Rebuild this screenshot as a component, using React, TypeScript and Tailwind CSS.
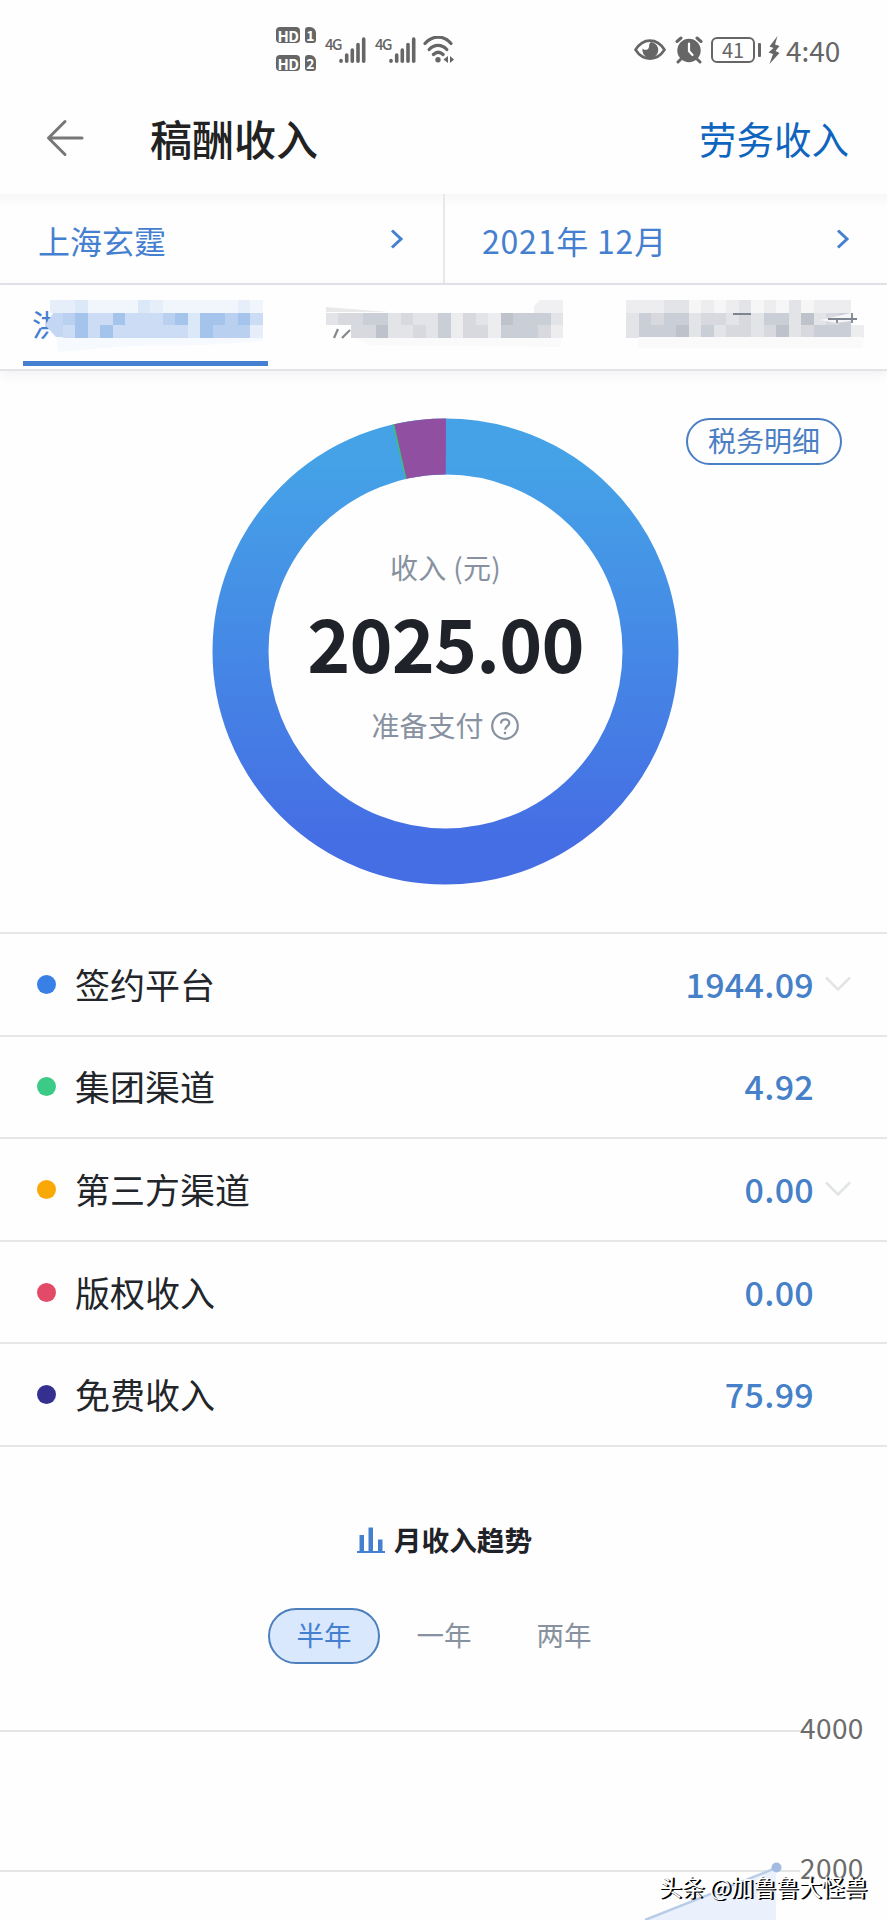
import type { ReactNode } from "react";

interface IncomeItem {
  name: string;
  amount: string;
  dot: string;
  expandable?: boolean;
}

const incomeItems: IncomeItem[] = [
  { name: "签约平台", amount: "1944.09", dot: "bg-[#3880e6]", expandable: true },
  { name: "集团渠道", amount: "4.92", dot: "bg-[#3ccb86]" },
  { name: "第三方渠道", amount: "0.00", dot: "bg-[#f9a806]", expandable: true },
  { name: "版权收入", amount: "0.00", dot: "bg-[#e24a68]" },
  { name: "免费收入", amount: "75.99", dot: "bg-[#35308f]" },
];

// One string per row of the censor mosaic, each letter is a shade
const blueShades: Record<string, string> = {
  a: "#f1f6fd",
  b: "#e6eef9",
  c: "#dbe8f8",
  d: "#cbdcf4",
  e: "#b9d0f0",
  f: "#a5c4ec",
};
const grayShades: Record<string, string> = {
  a: "#f6f6f7",
  b: "#ededef",
  c: "#e3e4e8",
  d: "#d7d9df",
  e: "#caced7",
  f: "#bdc2cb",
};

const CELL = 12.5;

interface MosaicProps {
  rows: string[];
  shades: Record<string, string>;
  x: number;
  y: number;
}

function Mosaic({ rows, shades, x, y }: MosaicProps) {
  return (
    <g shapeRendering="crispEdges">
      {rows.map((row, r) =>
        row.split("").map((c, i) =>
          shades[c] ? (
            <rect key={`${r}-${i}`} x={x + i * CELL} y={y + r * CELL} width={CELL} height={CELL} fill={shades[c]} />
          ) : null
        )
      )}
    </g>
  );
}

function Signal() {
  return (
    <svg width="27" height="28" viewBox="0 0 27 28" stroke="#666" strokeWidth="3.6" strokeLinecap="round">
      <path d="M2 24.500v.8M7.700 19v6.300M13.300 14v11.300M19 8.500v16.800M24.700 3v22.300" />
    </svg>
  );
}

function HdBadge({ sim }: { sim: string }) {
  return (
    <div className="flex gap-[5px] h-4 text-white font-bold leading-none">
      <span className="w-6 h-4 rounded-[4px] bg-[#666] text-[15px] tracking-[-0.5px] flex items-center justify-center">HD</span>
      <span className="w-[11px] h-4 rounded-[3px] rounded-tr-[6px] bg-[#666] text-[14px] flex items-center justify-center">
        {sim}
      </span>
    </div>
  );
}

function StatusBar() {
  return (
    <div className="h-[94px] flex text-[#666]">
      <div className="w-[276px] shrink-0" />
      <div className="flex flex-col gap-3 pt-[27px] w-[49px]">
        <HdBadge sim="1" />
        <HdBadge sim="2" />
      </div>
      <div className="flex pt-[36px]">
        <span className="text-[15px] font-medium leading-[15px] w-[14px] tracking-[-1.5px] whitespace-nowrap">4G</span>
        <Signal />
        <span className="text-[15px] font-medium leading-[15px] w-[14px] ml-[9px] tracking-[-1.5px] whitespace-nowrap">4G</span>
        <Signal />
        <svg className="ml-[7px]" width="34" height="30" viewBox="0 0 34 30" fill="none" stroke="#666" strokeWidth="3.2" strokeLinecap="round">
          <path d="M2 7.500C9.500-1 21-1 28 7.500M6.200 13.500c5-5.500 12.600-5.500 17.600 0M10.400 18.500c3-2.800 6.700-2.800 9.700 0" />
          <circle cx="15" cy="23.700" r="2.700" fill="#666" stroke="none" />
          <path d="M20.500 23.500l4.500-3.500v7zM31 23.500l-4-3.500v7z" fill="#666" stroke="none" />
        </svg>
      </div>
      <div className="flex ml-auto pt-[34px] pr-[47px]">
        <svg width="32" height="32" viewBox="0 0 32 32" fill="none">
          <path d="M1.500 15.800C9 3.500 23 3.500 30.500 15.800C23 27.500 9 27.500 1.500 15.800Z" stroke="#666" strokeWidth="2.600" />
          <path d="M17 8a8 8 0 1 1-8.500 6.200c1.400 2.500 6 2.200 6.500-1.200.3-2-.2-3.500 2-5z" fill="#666" />
        </svg>
        <svg className="ml-[9px]" width="28" height="32" viewBox="0 0 28 32" fill="none" stroke="#666" strokeLinecap="round">
          <circle cx="14" cy="16.500" r="11.700" fill="#666" stroke="none" />
          <path d="M2 7.500l4-3.500M26 7.500l-4-3.500M5.500 25.500L3 28M22.500 25.500L25 28" strokeWidth="3" />
          <path d="M14 9.500v7.500l3.500 4" stroke="#fff" strokeWidth="2.200" />
        </svg>
        <div className="ml-[8px] mt-[3px] w-[44px] h-[26px] rounded-[6px] border-2 border-[#666] flex items-center justify-center text-[20px] leading-none">
          41
        </div>
        <div className="ml-[3px] mt-[9px] w-[3px] h-[14px] rounded-[1px] bg-[#666]" />
        <svg className="ml-[7px] mt-[2px]" width="12" height="28" viewBox="0 0 12 28" fill="#666">
          <path d="M9.500 0L1.500 10.500l4 1.500L.5 16.500l4.500 1.500L1.500 28L11.500 17l-4-2L11.500 10l-4.500-1.500z" />
        </svg>
        <span className="ml-[6px] text-[28px] leading-[33px] w-[54px] whitespace-nowrap">4:40</span>
      </div>
    </div>
  );
}

function Chevron() {
  return (
    <svg width="14" height="20" viewBox="0 0 14 20" fill="none" stroke="#4580d0" strokeWidth="3">
      <path d="M2 1.500L11 10L2 18.500" />
    </svg>
  );
}

function Picker({ children, className }: { children: ReactNode; className: string }) {
  return (
    <div className={`flex items-center justify-between text-[32px] text-[#4580d0] ${className}`}>
      <span className="leading-none pt-[2px]">{children}</span>
      <Chevron />
    </div>
  );
}

function Tabs() {
  return (
    <div className="h-[86px] shrink-0 border-b-2 border-[#e3e4e8] shadow-[0_3px_12px_rgba(0,0,0,0.06)]">
      <svg width="887" height="84" viewBox="0 0 887 84">
        <text x="32" y="51" fontSize="30" fill="#4580d0">
          洪
        </text>
        <path d="M52 19l50-4 100 8 61-3v36l-60 4-75 1-70 6z" fill="#f6f9fd" />
        <path d="M45 40l9-13h10v25h-8z" fill="#c3d7f2" />
        <Mosaic x={50.2} y={15} shades={blueShades} rows={["bbcaaaacbaaaaaaba"]} />
        <Mosaic x={62.7} y={27.5} shades={blueShades} rows={["efddfdddefcffefd", "dfdfddddddcfeeeb"]} />
        <path d="M326 22l62 5h-62z" fill="#e9e9eb" />
        <path d="M350 52h212l-2 10-190-2z" fill="#fafafb" />
        <path d="M534 21l6-6h23v13h-29z" fill="#f0f0f2" />
        <path d="M334 53l4-9M342 53l8-8" stroke="#85888f" strokeWidth="2.200" />
        <Mosaic x={325.5} y={27.5} shades={grayShades} rows={["cddeecdccebdcbfeeec", "..ddfccdcebddbeeedb"]} />
        <Mosaic x={626} y={15} shades={grayShades} rows={["bbbccababcabacabbb"]} />
        <Mosaic x={626} y={27.5} shades={grayShades} rows={["cedeecddcdceecfcde", "ceeefcecddcdfcdeeeb"]} />
        <path d="M638 52h225v11H638z" fill="#fafafb" />
        <path d="M820 35l31-7v8l-15 2z" fill="#f6f6f7" />
        <path d="M733 29h18M828 34h29M852 28v10M837 33v5" stroke="#7e8490" strokeWidth="1.800" />
      </svg>
      <div className="-mt-[8px] ml-[23px] w-[245px] h-[5px] bg-[#4580d0]" />
    </div>
  );
}

const CX = 233.5;
const R_OUT = 233;
const R_IN = 177;

function slice(from: number, to: number) {
  const point = (r: number, deg: number) => {
    const a = ((deg - 90) * Math.PI) / 180;
    return `${CX + r * Math.cos(a)} ${CX + r * Math.sin(a)}`;
  };
  return `M${point(R_OUT, from)}A${R_OUT} ${R_OUT} 0 0 1 ${point(R_OUT, to)}L${point(R_IN, to)}A${R_IN} ${R_IN} 0 0 0 ${point(R_IN, from)}Z`;
}

function IncomeDonut() {
  return (
    <div className="relative w-[467px] h-[467px]">
      <svg width="467" height="467" viewBox="0 0 467 467">
        <defs>
          <linearGradient id="ring" x1="0" y1="0" x2="0" y2="467" gradientUnits="userSpaceOnUse">
            <stop offset="0.1" stopColor="#45a2e7" />
            <stop offset="0.9" stopColor="#456ee4" />
          </linearGradient>
        </defs>
        <circle cx={CX} cy={CX} r="205" fill="none" stroke="url(#ring)" strokeWidth="56" />
        <path d={slice(-13.2, -12.4)} fill="#3dba8b" />
        <path d={slice(-12.7, 0.1)} fill="#904fa0" />
      </svg>
      <div className="absolute inset-0 flex flex-col items-center text-[#87919f] text-[28px]">
        <div className="mt-[133px] leading-8 tracking-[0.3px]">收入 (元)</div>
        <div className="mt-[18px] text-[73px] leading-[80px] tracking-[-0.8px] font-bold text-[#1f2329]">2025.00</div>
        <div className="mt-[30px] flex items-center gap-[7px] leading-8 pr-px">
          <span className="-mt-[2px]">准备支付</span>
          <svg width="28" height="28" viewBox="0 0 28 28" fill="none" stroke="#87919f" strokeWidth="2.200">
            <circle cx="14" cy="14" r="12.800" />
            <path d="M10 11.500c0-5.500 8.300-5.500 8.300-.4 0 3-4.200 3.200-4.200 6.600" />
            <path d="M14 19.800v2.400" />
          </svg>
        </div>
      </div>
    </div>
  );
}

function IncomeRow({ item }: { item: IncomeItem }) {
  return (
    <div className="h-[102.6px] border-b-2 border-[#e6e6e8] flex items-center pl-[37px] pr-[36px]">
      <span className={`w-[19px] h-[19px] rounded-full ${item.dot}`} />
      <span className="ml-[19px] -mt-[2px] text-[35px] leading-none text-[#222529]">{item.name}</span>
      <span className="ml-auto -mt-px text-[34px] leading-none font-medium tracking-[0.3px] text-[#4580c8]">{item.amount}</span>
      <span className="w-[37px] flex justify-end">
        {item.expandable && (
          <svg width="26" height="16" viewBox="0 0 26 16" fill="none" stroke="#e3e4e6" strokeWidth="2.500">
            <path d="M1 1.500L13 13.500L25 1.500" />
          </svg>
        )}
      </span>
    </div>
  );
}

function TrendChart() {
  return (
    <div className="relative h-[220px]">
      <svg width="887" height="220" viewBox="0 0 887 220">
        <path d="M0 31h800M0 171h800" stroke="#e4e5e7" strokeWidth="2" />
        <path d="M645 220L776 168V220z" fill="#eaf1fc" />
        <path d="M645 220L776 168" stroke="#b8cce8" strokeWidth="2.500" />
        <circle cx="776.500" cy="167.500" r="5" fill="#a3bbe0" />
        <g fontSize="28" letterSpacing="0.4" fill="#6b6b6b">
          <text x="800" y="39">4000</text>
          <text x="800" y="179">2000</text>
        </g>
      </svg>
      <div className="absolute right-[20px] bottom-[17px] text-[22.7px] leading-8 whitespace-nowrap text-white [text-shadow:1px_1px_0_#000,2px_1px_0_#000]">
        头条 @加鲁鲁大怪兽
      </div>
    </div>
  );
}

export default function App() {
  return (
    <div className="w-[887px] h-[1920px] overflow-hidden flex flex-col bg-[#fefefe] font-['Noto_Sans_CJK_SC',sans-serif]">
      <StatusBar />
      <header className="h-[100px] shrink-0 flex items-center pl-[46px] pr-[38px] pb-[12px]">
        <svg width="38" height="38" viewBox="0 0 38 38" fill="none" stroke="#777" strokeWidth="3" strokeLinecap="round" strokeLinejoin="round">
          <path d="M36 19H3M19 2.500L2.500 19L19 35.500" />
        </svg>
        <h1 className="ml-[66px] text-[42px] leading-none font-medium text-[#222]">稿酬收入</h1>
        <span className="ml-auto text-[37.5px] leading-none text-[#0f65be]">劳务收入</span>
      </header>
      <div className="h-[91px] shrink-0 flex border-b-2 border-[#e3e4e8] bg-[linear-gradient(#f7f7f7,#fefefe_14px)]">
        <Picker className="w-[445px] border-r-2 border-[#e8e8ea] pl-[38px] pr-[39px]">上海玄霆</Picker>
        <Picker className="grow pl-[37px] pr-[37px] tracking-[0.8px]">2021年 12月</Picker>
      </div>
      <Tabs />
      <section className="relative h-[561px] shrink-0 pt-[47px] pl-[212px]">
        <IncomeDonut />
        <button className="absolute right-[45px] top-[47px] w-[156px] h-[47px] rounded-full border-2 border-[#4b7fc4] pb-[3px] text-[28px] leading-none text-[#4b7fc4]">
          税务明细
        </button>
      </section>
      <div className="shrink-0 border-t-2 border-[#e6e6e8]">
        {incomeItems.map((item) => (
          <IncomeRow key={item.name} item={item} />
        ))}
      </div>
      <div className="mt-[73px] shrink-0 h-10 flex items-center justify-center gap-[9px] pl-[2px]">
        <svg width="28" height="28" viewBox="0 0 28 28" fill="#4580d0">
          <path d="M0 25h28v2H0zM2.500 9h4.500v16H2.500zM11.500 1.500H16V25h-4.500zM21 13.500h4.500V25H21z" />
        </svg>
        <h2 className="text-[27.7px] leading-none font-bold text-[#1f2329]">月收入趋势</h2>
      </div>
      <div className="mt-[48px] shrink-0 flex pl-[268px] text-[27.5px] text-[#87919f]">
        <span className="w-[112px] h-14 rounded-full border-2 border-[#4b7fbd] bg-[#d9e8fc] text-[#4580d0] flex items-center justify-center leading-none pb-[2px]">
          半年
        </span>
        <span className="w-[128px] h-14 flex items-center justify-center leading-none pb-[2px]">一年</span>
        <span className="w-[112px] h-14 flex items-center justify-center leading-none pb-[2px]">两年</span>
      </div>
      <div className="mt-[36px] shrink-0">
        <TrendChart />
      </div>
    </div>
  );
}
